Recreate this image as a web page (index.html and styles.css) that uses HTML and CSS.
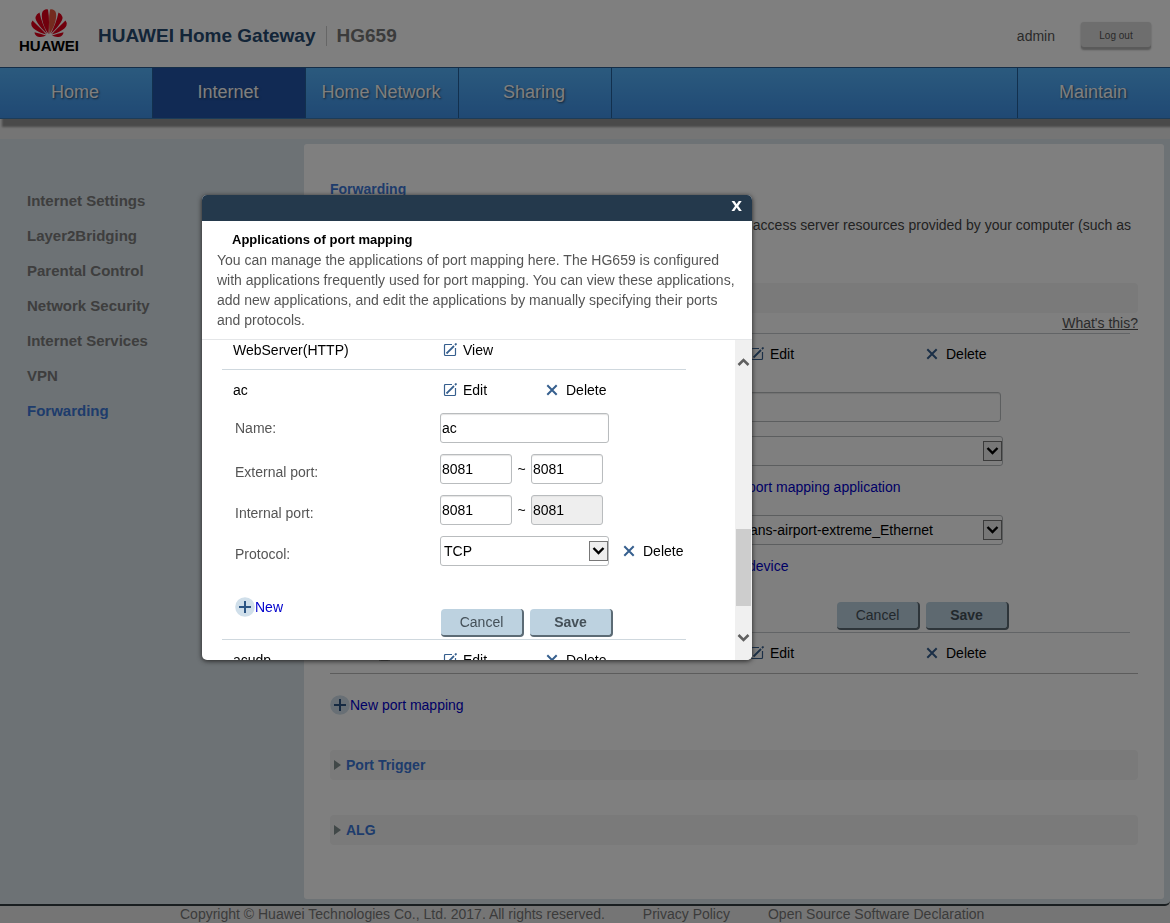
FILE: index.html
```html
<!DOCTYPE html>
<html lang="en">
<head>
<meta charset="utf-8">
<title>HUAWEI Home Gateway</title>
<link rel="stylesheet" href="styles.css">
</head>
<body>
<svg class="sprite" aria-hidden="true">
  <symbol id="i-edit" viewBox="0 0 14 14"><path d="M9 1.500H2.500Q1.500 1.500 1.500 2.500v9q0 1 1 1h9Q12.500 12.500 12.500 11.500V5" fill="none" stroke="currentColor" stroke-width="1.200"/><path d="M3.500 10.500L11 3" stroke="currentColor" stroke-width="1.800"/><path d="M12 2l1.500-1.500" stroke="currentColor" stroke-width="1.800"/></symbol>
  <symbol id="i-x" viewBox="0 0 12 12"><path d="M1.300 1.300l9.400 9.400M10.700 1.300L1.300 10.700" stroke="currentColor" stroke-width="2"/></symbol>
  <symbol id="i-plus" viewBox="0 0 20 20"><circle cx="10" cy="10" r="9.800" fill="#d0dfea"/><path d="M4 10h12M10 4v12" stroke="#2c5584" stroke-width="2"/></symbol>
  <symbol id="i-down" viewBox="0 0 19 20"><rect x=".5" y=".5" width="18" height="19" fill="#eee" stroke="#777"/><path d="M4.500 7L9.500 12L14.500 7" fill="none" stroke="#000" stroke-width="2.400"/></symbol>
</svg>
<header class="header">
  <div class="logo">
    <svg width="38" height="30" viewBox="0 0 38 30" fill="#e2001a">
      <path d="M18.500 26C12 17 10 5 13.500 2.500Q16 .5 18 1.500C19.500 10 19 19 18.500 26z"/>
      <path d="M19.500 26C26 17 28 5 24.500 2.500Q22 .5 20 1.500C18.500 10 19 19 19.500 26z" fill="#e8563f"/>
      <path d="M17.300 26C13 22 4.500 13 5.500 9Q6.500 5.500 9.500 4.500C11 12 14 19 17.300 26z"/>
      <path d="M20.700 26C25 22 33.500 13 32.500 9Q31.500 5.500 28.500 4.500C27 12 24 19 20.700 26z"/>
      <path d="M16.300 26.500C10 25 2.500 21 1.500 17.500Q.7 14.500 2.500 12.500C7 17 12.500 22 16.300 26.500z"/>
      <path d="M21.700 26.500C28 25 35.500 21 36.500 17.500Q37.300 14.500 35.500 12.500C31 17 25.500 22 21.700 26.500z"/>
      <path d="M16 27.600C13 29.500 8 29.500 6 27.500Q4.500 26 4.500 24.300C8 25 13 26.500 16 27.600z"/>
      <path d="M22 27.600C25 29.500 30 29.500 32 27.500Q33.500 26 33.500 24.300C30 25 25 26.500 22 27.600z"/>
    </svg>
    <span class="wordmark">HUAWEI</span>
  </div>
  <h1 class="product">HUAWEI Home Gateway</h1>
  <span class="model">HG659</span>
  <span class="user">admin</span>
  <button class="logout">Log out</button>
</header>
<nav class="nav">
  <a href="#">Home</a><a href="#" class="active">Internet</a><a href="#">Home Network</a><a href="#">Sharing</a><a href="#" class="last">Maintain</a>
</nav>
<main class="main">
  <nav class="side">
    <a href="#">Internet Settings</a><a href="#">Layer2Bridging</a><a href="#">Parental Control</a><a href="#">Network Security</a><a href="#">Internet Services</a><a href="#">VPN</a><a href="#" class="current">Forwarding</a>
  </nav>
  <section class="card">
    <h2 class="title">Forwarding</h2>
    <p class="intro">access server resources provided by your computer (such as</p>
    <div class="bar first"></div>
    <div class="help"><a href="#">What's this?</a></div>
    <div class="entry">
      <div class="cells"><span></span><button class="act edit"><svg><use href="#i-edit"/></svg>Edit</button><button class="act del"><svg><use href="#i-x"/></svg>Delete</button></div>
      <div class="fields">
        <input class="box wide" type="text" aria-label="Mapping name">
        <div class="select wider"><select aria-label="Application"><option></option></select><svg><use href="#i-down"/></svg></div>
        <a class="more" href="#">port mapping application</a>
        <div class="select wider host"><select aria-label="Internal host"><option>ans-airport-extreme_Ethernet</option></select><svg><use href="#i-down"/></svg></div>
        <a class="more" href="#">device</a>
      </div>
      <div class="buttons page-buttons"><button class="btn">Cancel</button><button class="btn save">Save</button></div>
    </div>
    <div class="cells second"><span><input type="checkbox" class="tick" aria-label="Enabled"></span><button class="act edit"><svg><use href="#i-edit"/></svg>Edit</button><button class="act del"><svg><use href="#i-x"/></svg>Delete</button></div>
    <a class="new" href="#"><svg><use href="#i-plus"/></svg>New port mapping</a>
    <div class="bar"><i class="tri"></i>Port Trigger</div>
    <div class="bar"><i class="tri"></i>ALG</div>
  </section>
</main>
<footer class="footer"><span>Copyright © Huawei Technologies Co., Ltd. 2017. All rights reserved.</span><a href="#">Privacy Policy</a><a href="#">Open Source Software Declaration</a></footer>

<div class="overlay"></div>
<div class="dialog" role="dialog" aria-labelledby="dlg-title">
  <div class="dialog-bar"><button class="close" aria-label="Close">X</button></div>
  <div class="dialog-head">
    <h3 id="dlg-title">Applications of port mapping</h3>
    <p>You can manage the applications of port mapping here. The HG659 is configured with applications frequently used for port mapping. You can view these applications, add new applications, and edit the applications by manually specifying their ports and protocols.</p>
  </div>
  <div class="dialog-body">
    <div class="list">
      <div class="row top"><span>WebServer(HTTP)</span><button class="act"><svg><use href="#i-edit"/></svg>View</button></div>
      <div class="row"><span>ac</span><button class="act"><svg><use href="#i-edit"/></svg>Edit</button><button class="act del"><svg><use href="#i-x"/></svg>Delete</button></div>
      <form class="form">
        <div class="line"><label class="mid" for="name">Name:</label><input class="box name" id="name" type="text" value="ac"></div>
        <div class="line"><label for="ext">External port:</label><input class="box port" id="ext" type="text" value="8081"><span class="to">~</span><input class="box port" type="text" value="8081" aria-label="External port end"></div>
        <div class="line"><label for="int">Internal port:</label><input class="box port" id="int" type="text" value="8081"><span class="to">~</span><input class="box port" type="text" value="8081" disabled aria-label="Internal port end"></div>
        <div class="line"><label for="proto">Protocol:</label><div class="select name"><select id="proto"><option>TCP</option></select><svg><use href="#i-down"/></svg></div><button type="button" class="act del"><svg><use href="#i-x"/></svg>Delete</button></div>
        <div class="ending"><a class="new" href="#"><svg><use href="#i-plus"/></svg>New</a><div class="buttons"><button type="button" class="btn">Cancel</button><button type="button" class="btn save">Save</button></div></div>
      </form>
      <div class="row"><span>acudp</span><button class="act"><svg><use href="#i-edit"/></svg>Edit</button><button class="act del"><svg><use href="#i-x"/></svg>Delete</button></div>
    </div>
    <div class="scroll" aria-hidden="true">
      <svg viewBox="0 0 12 10"><path d="M1 8l5-5 5 5" fill="none" stroke="#606060" stroke-width="2.600"/></svg>
      <div class="thumb"></div>
      <svg viewBox="0 0 12 10"><path d="M1 2l5 5 5-5" fill="none" stroke="#606060" stroke-width="2.600"/></svg>
    </div>
  </div>
</div>
</body>
</html>
```
FILE: styles.css
```css
* { box-sizing: border-box; }
body {
  margin: 0;
  min-height: 100vh;
  overflow: hidden;
  background: #ebebeb;
  color: #000;
  font: 14px/20px "Liberation Sans", Arial, sans-serif;
}
h1, h2, h3, p { margin: 0; }
a { text-decoration: none; }
button, input, select { font: inherit; color: inherit; }
button { padding: 0; border: 0; background: none; cursor: pointer; }
.sprite { display: none; }

.header {
  display: flex;
  align-items: center;
  height: 67px;
  padding: 4px 19px 0 20px;
  background: #fff;
}
.logo { display: flex; flex-direction: column; align-items: center; width: 58px; margin-bottom: 10px; }
.wordmark { font-size: 15px; line-height: 15px; font-weight: bold; }
.product { margin-left: 20px; font-size: 19px; color: #264a70; }
.model {
  margin-left: 10px;
  padding-left: 10px;
  border-left: 1px solid #ccc;
  font-size: 19px;
  font-weight: bold;
  color: #777;
}
.user { margin-left: auto; color: #555; font-size: 14px; }
.logout {
  width: 70px;
  height: 27px;
  margin-left: 26px;
  border-radius: 3px;
  background: #dcdcdc;
  box-shadow: inset 0 -2px 0 #b4b4b4, 0 1px 2px #aaa;
  color: #555;
  font-size: 10px;
}

.nav {
  display: flex;
  height: 52px;
  border-top: 1px solid #2a5c90;
  border-bottom: 1px solid #3a78b0;
  background: linear-gradient(#56b4fc, #4092e8);
  box-shadow: 2px 8px 2px #949494;
}
.nav a {
  width: 153px;
  padding-right: 2px;
  border-right: 1px solid #24609c;
  color: #fff;
  font-size: 18px;
  line-height: 48px;
  text-align: center;
  text-shadow: 1px 1px 2px #246;
}
.nav .active { background: #2254a8; }
.nav .last { margin-left: auto; border-right: 0; border-left: 1px solid #24609c; }

.main {
  display: flex;
  margin-top: 20px;
  padding: 5px 6px 5px 0;
  border-bottom: 2px solid #333c40;
  border-radius: 0 0 5px 0;
  background: #dae4ea;
}
.side { display: flex; flex-direction: column; width: 304px; padding: 39px 0 0 27px; }
.side a { font-size: 15px; line-height: 35px; font-weight: bold; color: #7c7c7c; }
.side .current { color: #3c78d8; }
.card {
  flex: 1;
  padding: 35px 26px 19px;
  border-radius: 3px;
  background: #fff;
}
.title { font-size: 14px; line-height: 20px; color: #3c78d8; }
.intro { margin-top: 16px; padding-right: 7px; text-align: right; color: #444; }
.bar {
  display: flex;
  align-items: center;
  height: 30px;
  margin-bottom: 35px;
  padding-left: 4px;
  border-radius: 4px;
  background: #f4f4f4;
  color: #3c78d8;
  font-weight: bold;
}
.bar.first { margin: 48px 0 0; }
.tri { margin-right: 5px; border: 5px solid transparent; border-left: 7px solid #829090; border-right: 0; }
.help { display: flex; justify-content: flex-end; height: 20px; }
.help a { color: #555; text-decoration: underline; }
.entry { margin-right: 8px; border: solid #c4c8cc; border-width: 1px 0; }
.cells { display: grid; grid-template-columns: 420px 176px 1fr; height: 40px; align-items: center; }
.second { height: 41px; margin-bottom: 21px; border-bottom: 1px solid #b8b8b8; }
.tick { display: block; margin: 3px 0 0 48px; }
.act { display: inline-flex; align-items: center; gap: 6px; height: 20px; }
.act svg { width: 14px; height: 14px; color: #365f8e; }
.act.del { gap: 8px; }
.act.del svg { width: 12px; height: 12px; }
.fields { display: flex; flex-direction: column; align-items: flex-start; gap: 14px; margin: 18px 0 0 402px; }
.box {
  height: 30px;
  padding: 0 1px;
  border: 1px solid #b9bcbe;
  border-radius: 3px;
  background: #fff;
  box-shadow: inset 0 1px 1px #e4e4e4;
}
.box:disabled { background: #eee; color: #000; }
.wide { width: 269px; }
.select { position: relative; height: 30px; }
.wider { width: 271px; }
.select select {
  width: 100%;
  height: 30px;
  padding: 0 0 0 3px;
  border: 1px solid #b9bcbe;
  border-radius: 3px;
  background: #fff;
  appearance: none;
}
.host select { padding-left: 17px; }
.select svg { position: absolute; right: 1px; top: 5px; width: 19px; height: 20px; pointer-events: none; }
.more { margin: -3px 0 4px 16px; color: #00c; }
.buttons { display: flex; gap: 6px; }
.page-buttons { margin: 22px 121px 2px; justify-content: flex-end; }
.btn {
  width: 83px;
  height: 28px;
  border: solid #5c6b75;
  border-width: 0 2px 2px 0;
  border-radius: 4px;
  background: #bdd2e0;
  color: #445058;
}
.save { font-weight: bold; }
.new { display: flex; align-items: center; color: #00c; }
.new svg { width: 20px; height: 20px; }
.card > .new { margin-bottom: 35px; }

.footer { display: flex; padding-left: 180px; line-height: 16px; color: #777; white-space: nowrap; }
.footer a { margin-left: 38px; color: #777; }

.overlay { position: fixed; inset: 0; background: rgba(0, 0, 0, .5); }
.dialog {
  position: absolute;
  left: 202px;
  top: 195px;
  width: 550px;
  height: 465px;
  display: flex;
  flex-direction: column;
  overflow: hidden;
  border-radius: 5px;
  background: #fff;
  box-shadow: 0 1px 5px #222;
}
.dialog-bar { display: flex; justify-content: flex-end; height: 26px; padding: 0 10px; background: #24394c; }
.close { height: 23px; color: #fff; font: bold 14px/23px "DejaVu Sans", sans-serif; }
.dialog-head { padding: 9px 15px 9px; border-bottom: 1px solid #e4e6e8; }
.dialog-head h3 { padding-left: 15px; font-size: 13px; line-height: 20px; }
.dialog-head p { color: #555; }
.dialog-body { display: flex; flex: 1; min-height: 0; }
.list { width: 464px; margin-left: 20px; }
.row { display: grid; grid-template-columns: 210px 103px 1fr; align-items: center; height: 40px; padding-left: 11px; }
.row.top { height: 30px; padding-bottom: 11px; border-bottom: 1px solid #cfd8de; }
.form { display: flex; flex-direction: column; gap: 11px; padding: 3px 0 2px 13px; border-bottom: 1px solid #cfd8de; }
.line { display: flex; align-items: center; height: 30px; }
.line label { width: 205px; padding-top: 6px; color: #555; }
.line .mid { padding-top: 0; }
.name { width: 169px; }
.port { width: 72px; }
.to { width: 19px; text-align: center; }
.line .act { margin-left: 14px; }
.ending { display: flex; justify-content: space-between; padding: 20px 73px 0 0; }
.ending .buttons { padding-top: 12px; }
.ending .new { align-self: flex-start; }
.scroll {
  display: flex;
  flex-direction: column;
  align-items: center;
  width: 17px;
  margin-left: auto;
  padding: 17px 0;
  background: #f0f0f0;
}
.scroll svg { width: 13px; height: 10px; }
.thumb { width: 15px; height: 77px; margin: auto 0 27px; background: #cdcdcd; }
```
